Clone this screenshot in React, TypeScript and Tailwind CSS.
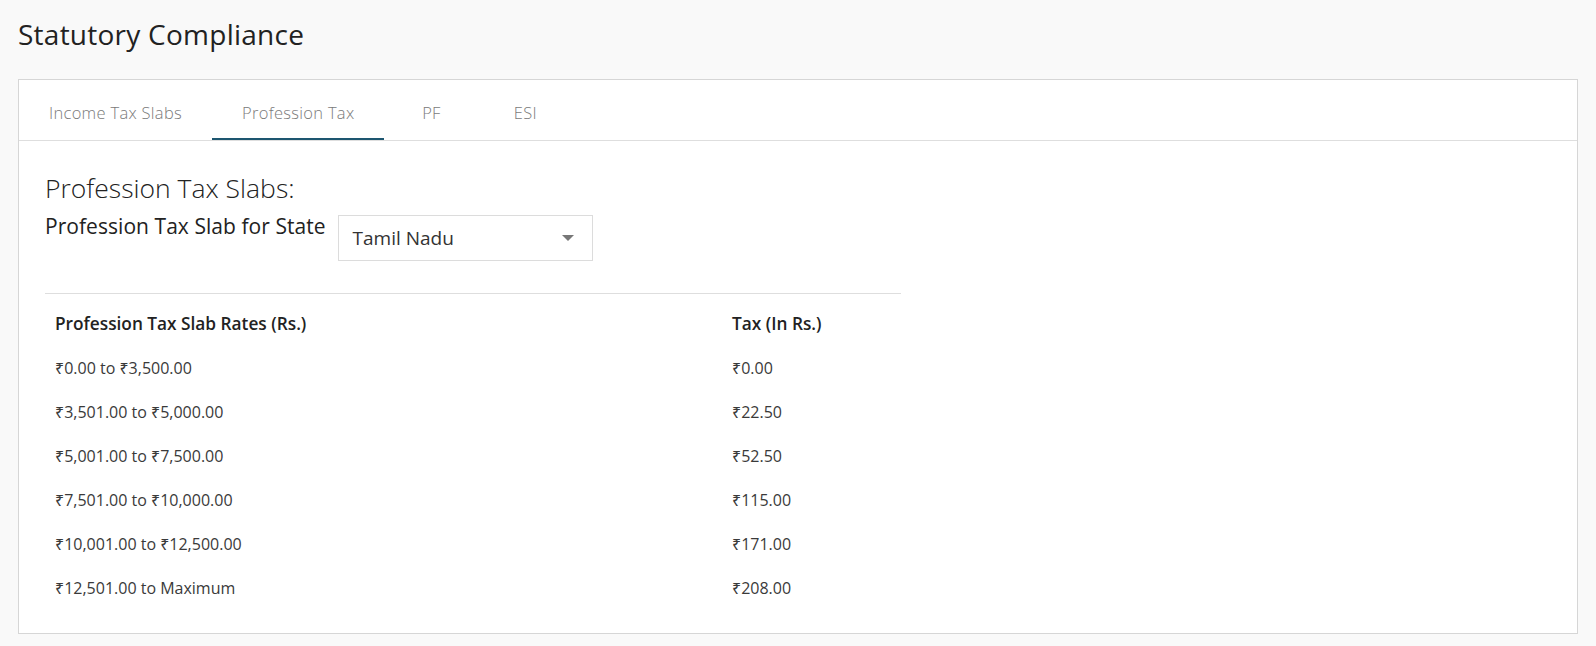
import { useState } from "react"

const tabs = ["Income Tax Slabs", "Profession Tax", "PF", "ESI"]

const slabs = [
  { range: "₹0.00 to ₹3,500.00", tax: "₹0.00" },
  { range: "₹3,501.00 to ₹5,000.00", tax: "₹22.50" },
  { range: "₹5,001.00 to ₹7,500.00", tax: "₹52.50" },
  { range: "₹7,501.00 to ₹10,000.00", tax: "₹115.00" },
  { range: "₹10,001.00 to ₹12,500.00", tax: "₹171.00" },
  { range: "₹12,501.00 to Maximum", tax: "₹208.00" },
]

export default function App() {
  const [active, setActive] = useState("Profession Tax")

  return (
    <div className="min-h-[646px] bg-[#f9f9f9] px-[18px] pt-[15px] font-['Open_Sans','Noto_Sans',sans-serif] text-[#333]">
      <h1 className="text-[28px] leading-[38px] text-[#222] tracking-[0.25px]">Statutory Compliance</h1>

      <div className="mt-[26px] border border-[#d6d6d6] bg-white">
        <div className="flex h-[61px] border-b border-[#dedede]">
          {tabs.map((tab) => (
            <button
              key={tab}
              onClick={() => setActive(tab)}
              className={
                "min-w-[94px] px-[30px] pt-[8px] text-center text-[16.5px] font-light tracking-[0.3px] text-[#7a7a7a] border-b-2 " +
                (active === tab ? "border-[#1d5670]" : "border-transparent")
              }
            >
              {tab}
            </button>
          ))}
        </div>

        <div className="px-[26px] pt-[30px] pb-[23px]">
          <h2 className="text-[26.5px] font-light leading-[34px] text-[#222]">Profession Tax Slabs:</h2>

          <div className="mt-[6px] flex items-start gap-[12px]">
            <label className="text-[21px] leading-[30px] text-[#222] tracking-[0.05px]">Profession Tax Slab for State</label>
            <div className="mt-[4px] flex h-[46px] w-[255px] items-center justify-between border border-[#dcdcdc] bg-white pl-[14px] pr-[18px]">
              <span className="text-[19px] text-[#333]">Tamil Nadu</span>
              <span className="h-0 w-0 border-x-[6px] border-t-[6px] border-x-transparent border-t-[#777]" />
            </div>
          </div>

          <table className="mt-[32px] w-[856px] border-t border-[#dedede] text-left">
            <thead>
              <tr className="h-[52px]">
                <th className="w-[677px] px-[10px] pt-[8px] text-[17.25px] font-semibold text-[#222]">Profession Tax Slab Rates (Rs.)</th>
                <th className="px-[10px] pt-[8px] text-[17.25px] font-semibold text-[#222]">Tax (In Rs.)</th>
              </tr>
            </thead>
            <tbody>
              {slabs.map((row) => (
                <tr key={row.range} className="h-[44px]">
                  <td className="px-[10px] text-[16px] text-[#3a3a3a]">{row.range}</td>
                  <td className="px-[10px] text-[16px] text-[#3a3a3a]">{row.tax}</td>
                </tr>
              ))}
            </tbody>
          </table>
        </div>
      </div>
    </div>
  )
}
